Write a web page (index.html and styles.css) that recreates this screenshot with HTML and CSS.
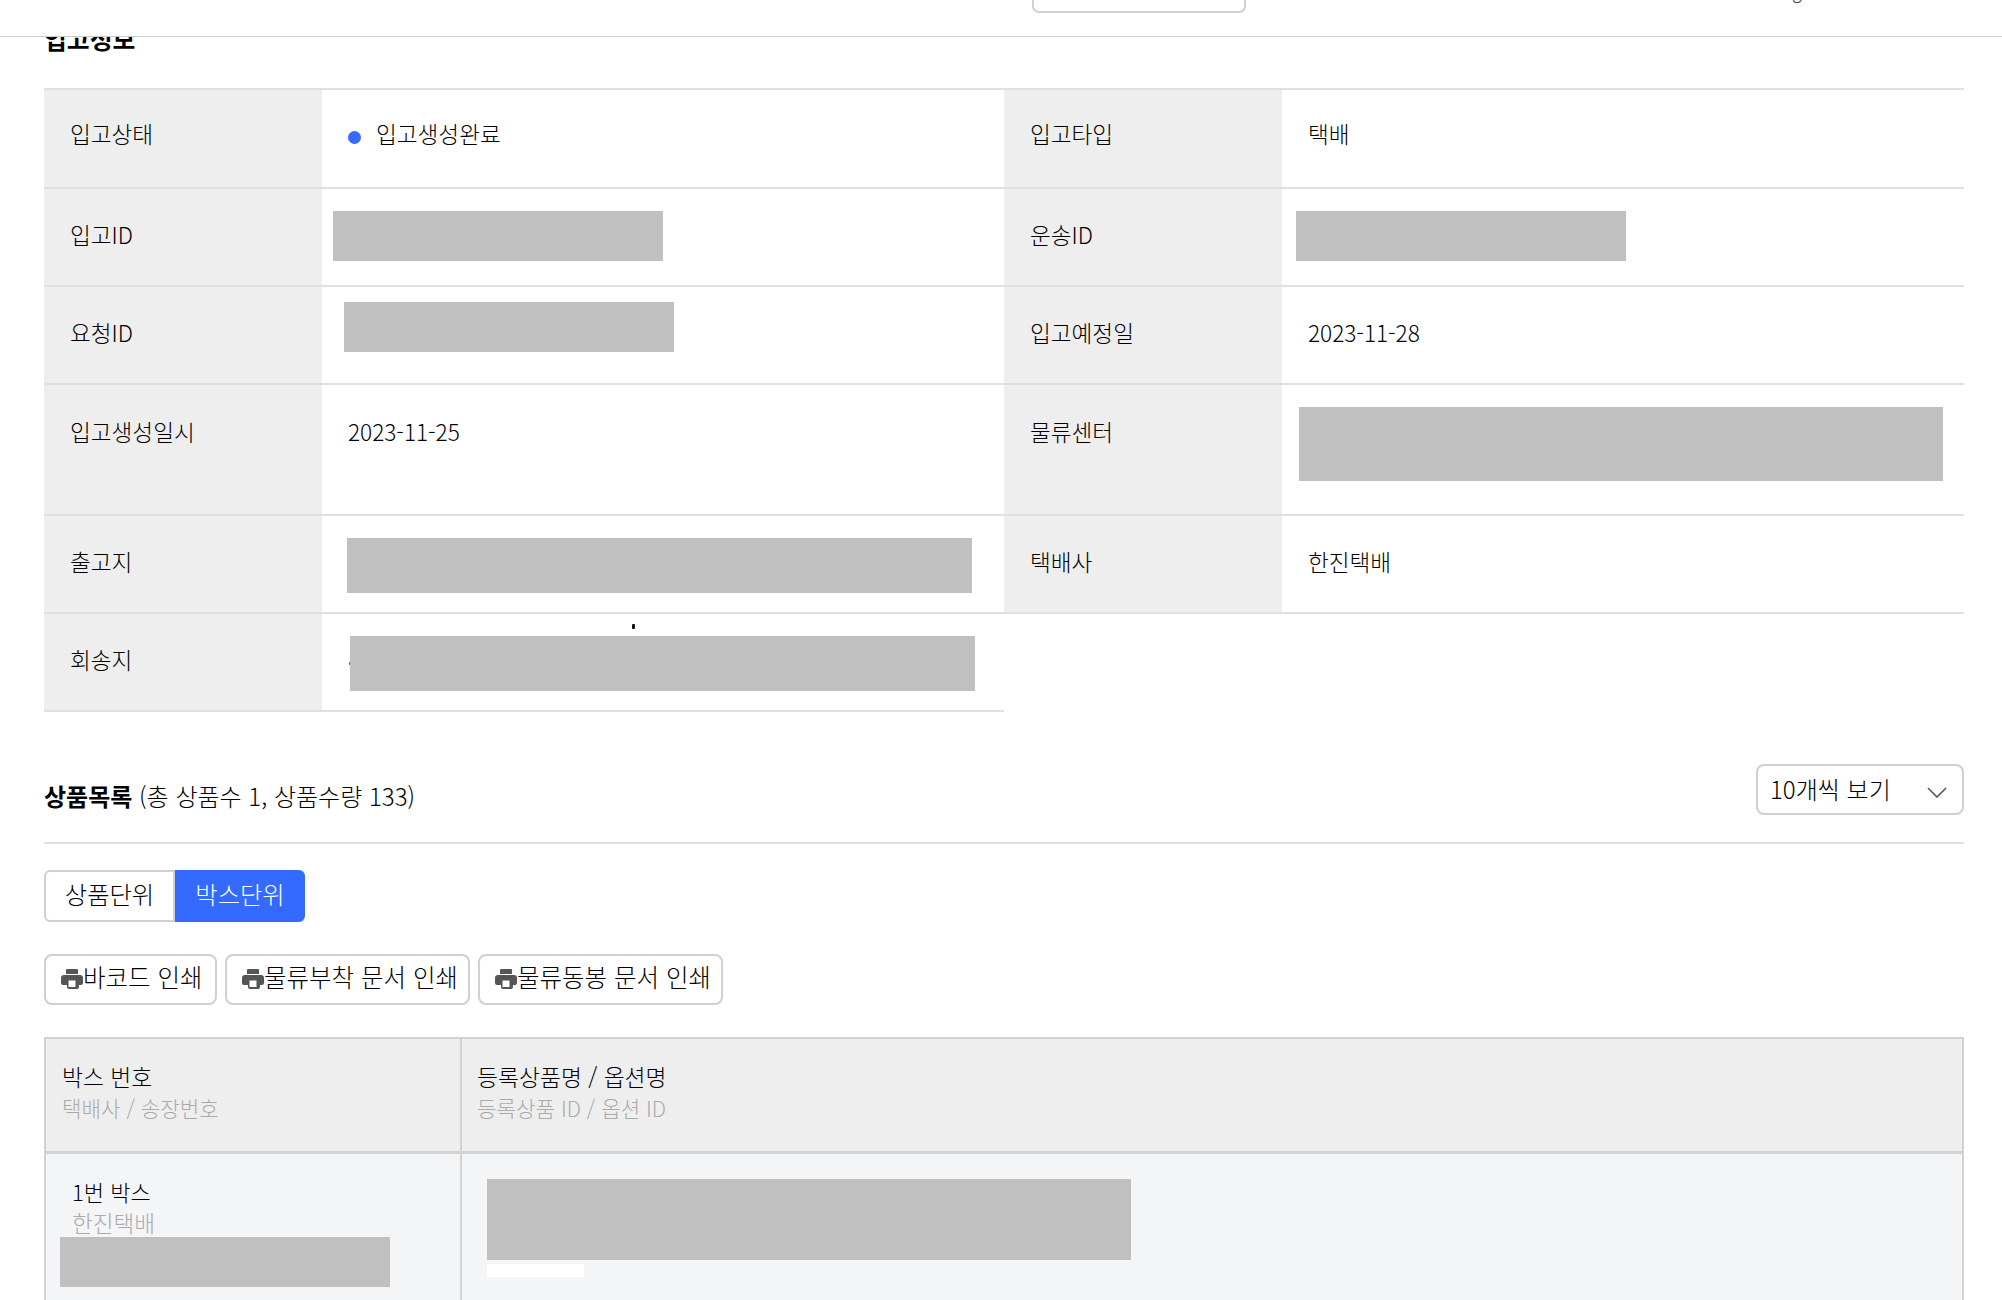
FILE: index.html
```html
<!DOCTYPE html>
<html lang="ko">
<head>
<meta charset="utf-8">
<title>입고정보</title>
<link rel="stylesheet" href="styles.css">
</head>
<body>
<header class="topbar">
  <div class="topbar-button"></div>
  <span class="topbar-glyph">g</span>
</header>
<main class="page">
  <h2 class="section-title">입고정보</h2>
  <section class="info-grid">
    <div class="info-row">
      <div class="info-cell"><div class="info-label">입고상태</div><div class="info-value"><span class="status-dot"></span>입고생성완료</div></div>
      <div class="info-cell"><div class="info-label">입고타입</div><div class="info-value">택배</div></div>
    </div>
    <div class="info-row">
      <div class="info-cell"><div class="info-label">입고ID</div><div class="info-value"><span class="mask mask-inbound"></span></div></div>
      <div class="info-cell"><div class="info-label">운송ID</div><div class="info-value"><span class="mask mask-transport"></span></div></div>
    </div>
    <div class="info-row">
      <div class="info-cell"><div class="info-label">요청ID</div><div class="info-value"><span class="mask mask-request"></span></div></div>
      <div class="info-cell"><div class="info-label">입고예정일</div><div class="info-value">2023-11-28</div></div>
    </div>
    <div class="info-row info-row-tall">
      <div class="info-cell"><div class="info-label">입고생성일시</div><div class="info-value">2023-11-25</div></div>
      <div class="info-cell"><div class="info-label">물류센터</div><div class="info-value"><span class="mask mask-center"></span></div></div>
    </div>
    <div class="info-row">
      <div class="info-cell"><div class="info-label">출고지</div><div class="info-value"><span class="mask mask-origin"></span></div></div>
      <div class="info-cell"><div class="info-label">택배사</div><div class="info-value">한진택배</div></div>
    </div>
    <div class="info-row">
      <div class="info-cell info-cell-last"><div class="info-label">회송지</div><div class="info-value"><span class="tick"></span><span class="tick tick-left"></span><span class="mask mask-return"></span></div></div>
    </div>
  </section>

  <section class="list-head">
    <div class="list-title"><strong>상품목록</strong> (총 상품수 1, 상품수량 133)</div>
    <div class="page-size"><span class="page-size-text">10개씩 보기</span>
      <svg class="chevron" viewBox="0 0 20 11" width="20" height="11"><path d="M1 1l9 9 9-9" fill="none" stroke="#555" stroke-width="1.6"/></svg>
    </div>
  </section>

  <div class="segment">
    <button class="segment-btn">상품단위</button>
    <button class="segment-btn segment-btn-on">박스단위</button>
  </div>

  <div class="print-row">
    <button class="print-btn print-btn-barcode"><svg class="printer" viewBox="0 0 22 20" width="22" height="20"><use href="#printer-icon"/></svg>바코드 인쇄</button>
    <button class="print-btn print-btn-doc"><svg class="printer" viewBox="0 0 22 20" width="22" height="20"><use href="#printer-icon"/></svg>물류부착 문서 인쇄</button>
    <button class="print-btn print-btn-doc"><svg class="printer" viewBox="0 0 22 20" width="22" height="20"><use href="#printer-icon"/></svg>물류동봉 문서 인쇄</button>
  </div>

  <section class="box-table">
    <div class="box-row box-row-head">
      <div class="box-cell box-cell-no"><div class="box-main">박스 번호</div><div class="box-sub">택배사 / 송장번호</div></div>
      <div class="box-cell"><div class="box-main">등록상품명 / 옵션명</div><div class="box-sub">등록상품 ID / 옵션 ID</div></div>
    </div>
    <div class="box-row box-row-body">
      <div class="box-cell box-cell-no box-cell-body"><div class="box-main">1번 박스</div><div class="box-sub">한진택배</div><span class="mask mask-invoice"></span></div>
      <div class="box-cell"><span class="mask mask-product"></span><span class="white-chip"></span></div>
    </div>
  </section>
</main>
<svg class="icon-defs" width="0" height="0">
  <symbol id="printer-icon" viewBox="0 0 22 20">
    <path fill="#555" fill-rule="evenodd" d="M6 0h10a1 1 0 0 1 1 1v4H5V1a1 1 0 0 1 1-1zM3 6h16a3 3 0 0 1 3 3v5a2 2 0 0 1-2 2h-2v2a2 2 0 0 1-2 2H8a2 2 0 0 1-2-2v-2H2a2 2 0 0 1-2-2V9a3 3 0 0 1 3-3zM7.500 11.500v6.500h7v-6.500z"/>
  </symbol>
</svg>
</body>
</html>
```
FILE: styles.css
```css
* { box-sizing: border-box; }
html, body { margin: 0; padding: 0; height: 1300px; overflow: hidden; background: #fff; }
body { font-family: "Noto Sans CJK KR", "Noto Sans", sans-serif; color: #000; font-size: 22.6px; font-weight: 300; position: relative; }
button { font: inherit; color: inherit; background: none; cursor: pointer; }
.icon-defs { position: absolute; }

.topbar { position: absolute; top: 0; left: 0; right: 0; height: 37px; background: #fff; border-bottom: 1px solid #ccc; z-index: 5; overflow: hidden; }
.topbar-button { position: absolute; left: 1032px; top: -38px; width: 214px; height: 51px; border: 2px solid #d0d0d0; border-radius: 7px; }
.topbar-glyph { position: absolute; left: 1792px; top: -25px; font-size: 18px; line-height: 30px; color: #444; }

.page { padding: 22px 38px 0 44px; }
.section-title { margin: 0 0 34px; font-size: 24.8px; line-height: 32px; font-weight: 700; }

.info-grid { border-top: 2px solid #e0e0e0; }
.info-row { display: grid; grid-template-columns: 1fr 1fr; height: 98px; }
.info-row:first-child { height: 99px; }
.info-row-tall { height: 131px; }
.info-cell { display: flex; border-bottom: 2px solid #e0e0e0; }
.info-label { width: 278px; flex: none; padding: 31px 26px 0; background: #eee; line-height: 30px; }
.info-value { flex: 1; position: relative; padding: 31px 26px 0; line-height: 30px; }
.info-row:first-child .info-label, .info-row:first-child .info-value { padding-top: 29px; }
.info-row-tall .info-label, .info-row-tall .info-value { padding-top: 32px; }
.status-dot { display: inline-block; width: 13px; height: 13px; margin-right: 15px; border-radius: 50%; background: #346aff; vertical-align: -1px; }

.mask { position: absolute; background: #c0c0c0; display: block; }
.mask-inbound { left: 11px; top: 22px; width: 330px; height: 50px; }
.mask-transport { left: 14px; top: 22px; width: 330px; height: 50px; }
.mask-request { left: 22px; top: 15px; width: 330px; height: 50px; }
.mask-center { left: 17px; top: 22px; width: 644px; height: 74px; }
.mask-origin { left: 25px; top: 22px; width: 625px; height: 55px; }
.mask-return { left: 28px; top: 22px; width: 625px; height: 55px; }
.tick { position: absolute; left: 310px; top: 10px; width: 3px; height: 5px; background: #111; border-radius: 1px; }
.tick-left { left: 27px; top: 48px; width: 2px; height: 3px; background: #555; }

.list-head { display: flex; justify-content: space-between; align-items: flex-start; height: 132px; padding-top: 52px; border-bottom: 2px solid #e0e0e0; margin-bottom: 26px; }
.list-title { font-size: 24px; line-height: 32px; margin-top: 16px; }
.list-title strong { font-weight: 700; }
.page-size { width: 208px; height: 51px; border: 2px solid #d0d0d0; border-radius: 8px; display: flex; align-items: center; justify-content: space-between; padding: 0 15px 0 12px; font-size: 24px; }
.page-size-text { padding-bottom: 3px; }
.chevron { flex: none; margin-top: 6px; }

.segment { display: flex; height: 52px; width: 261px; margin-bottom: 32px; }
.segment-btn { width: 131px; flex: none; border: 2px solid #d0d0d0; border-radius: 6px 0 0 6px; padding: 0 0 5px; font-size: 24.3px; background: #fff; }
.segment-btn-on { width: 130px; background: #346aff; color: #fff; border-color: #346aff; border-radius: 0 6px 6px 0; }

.print-row { display: flex; gap: 8px; margin-bottom: 32px; }
.print-btn { height: 51px; border: 2px solid #d0d0d0; border-radius: 8px; padding: 0 0 6px 15px; font-size: 24.5px; display: flex; align-items: center; background: #fff; white-space: nowrap; }
.print-btn-barcode { width: 173px; }
.print-btn-doc { width: 245px; }
.printer { flex: none; margin-top: 5px; }

.box-table { border: 2px solid #d2d2d2; border-bottom: 0; }
.box-row { display: flex; }
.box-row-head { background: #eee; height: 115px; border-bottom: 3px solid #d4d4d4; }
.box-row-body { background: #f4f5f7; height: 148px; }
.box-cell { flex: 1; position: relative; padding: 21px 15px 0; }
.box-cell-no { flex: none; width: 416px; border-right: 2px solid #d2d2d2; padding-left: 16px; }
.box-cell-body { padding: 21px 26px 0; }
.box-main { font-size: 22.8px; line-height: 33px; }
.box-sub { font-size: 21.2px; line-height: 30px; color: #aaa; }
.box-cell-body .box-main { font-size: 22px; }
.box-cell-body .box-sub { font-size: 22.6px; }
.mask-invoice { left: 14px; top: 83px; width: 330px; height: 50px; }
.mask-product { left: 25px; top: 25px; width: 644px; height: 81px; }
.white-chip { position: absolute; left: 25px; top: 110px; width: 97px; height: 13px; background: #fff; }
```
